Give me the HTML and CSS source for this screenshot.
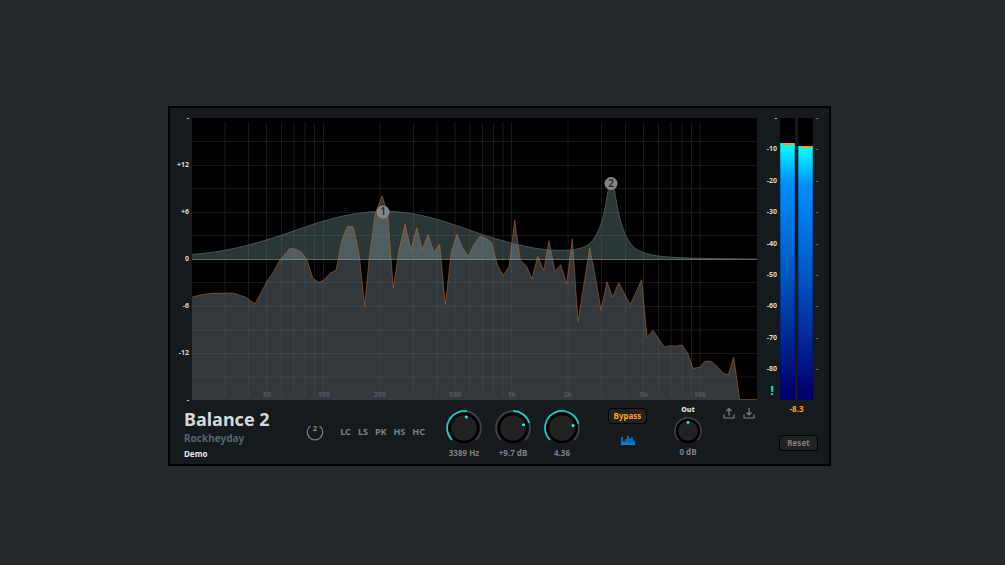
FILE: index.html
```html
<!DOCTYPE html>
<html lang="en">
<head>
    <meta charset="UTF-8">
    <meta name="viewport" content="width=device-width, initial-scale=1.0">
    <title>Balance 2</title>
    <link rel="stylesheet" href="styles.css">
</head>
<body>
    <main class="plugin">
        <ul class="scale gain-scale">
            <li>-</li>
            <li>+12</li>
            <li>+6</li>
            <li>0</li>
            <li>-6</li>
            <li>-12</li>
            <li>-</li>
        </ul>

        <svg class="plot" viewBox="0 0 565 282" role="img" aria-label="Equalizer curve and spectrum">
            <rect width="565" height="282" fill="#000"/>
            <path class="spectrum-fill" d="M0 179 10 176.7 20 175.3 41 175 53 179 63 185.7 70 173 75 163 80 156.3 88 142 98 130.3 103 131 109 133.7 115 142 121 160.7 127 164.3 132 162 138 155.3 144 152.3 146 142 150 122 155.3 108.3 161.3 108.7 167 135.3 172.7 188 177 142 183 97 190 77.7 195.7 95.3 199 140.3 201.3 170.3 207 132 213 106.3 219 131.7 224.7 109.7 230.3 131.7 236 116.3 242 134.3 247.7 126.3 253.3 186.7 259.3 134.3 265 116.3 270.7 130.3 276.3 138.3 282.3 126 288 118.3 293.7 120.3 299.7 124.7 305.3 146.7 311.3 157.7 317 148.7 322.7 102.3 328.3 142.3 334.3 147.7 340 161 345.7 138.3 351.7 152.7 357 122.7 363 153.3 368.7 146.7 374.7 166 380.3 120.7 386 203.7 397.7 129.7 403.3 158.7 409 192 415 164 420.7 179 426.7 164.7 438.3 186.7 449.7 161.7 455 218.7 461 212.3 472.3 229 478.3 227.7 484 228.3 490 227 495.7 235.3 501 250.3 507.7 249.3 513 243.3 519 243.3 524.7 248 531 255 536.3 257 541.7 239 547.7 281.5V282H0Z"/>
            <path class="curve-fill" d="M0 136.5C33 134 60 127 90 117S150 94 191 93.3C235 93 270 111 303 120.5S350 132 368 132.3C380 132.5 389 131 394.700 127.700C402 123 406 115 409.700 104C412.500 95 415 80 416.700 69L418.700 63 422 69C424 82 425.500 93 428.700 103.700C432 115 435 121 439.700 127C444 132 449 134 456 136C470 140 500 140.500 565 141H0Z"/>
            <path class="grid" d="M33 4V278M56.500 4V278M74.500 4V278M89.500 4V278M102 4V278M113 4V278M122.500 4V278M131.500 4V278M188 4V278M221.500 4V278M245 4V278M263 4V278M278 4V278M290.500 4V278M301.500 4V278M311 4V278M319.500 4V278M376 4V278M409.500 4V278M433.500 4V278M451.500 4V278M466.500 4V278M479 4V278M490 4V278M499.500 4V278M508 4V278"/>
            <path class="grid" d="M0 23.500H565M0 47.500H565M0 70.500H565M0 94.500H565M0 117.500H565M0 164.500H565M0 188.500H565M0 212H565M0 235.500H565M0 259H565"/>
            <path class="zero" d="M0 141.500H565"/>
            <path class="spectrum-line" d="M0 179 10 176.7 20 175.3 41 175 53 179 63 185.7 70 173 75 163 80 156.3 88 142 98 130.3 103 131 109 133.7 115 142 121 160.7 127 164.3 132 162 138 155.3 144 152.3 146 142 150 122 155.3 108.3 161.3 108.7 167 135.3 172.7 188 177 142 183 97 190 77.7 195.7 95.3 199 140.3 201.3 170.3 207 132 213 106.3 219 131.7 224.7 109.7 230.3 131.7 236 116.3 242 134.3 247.7 126.3 253.3 186.7 259.3 134.3 265 116.3 270.7 130.3 276.3 138.3 282.3 126 288 118.3 293.7 120.3 299.7 124.7 305.3 146.7 311.3 157.7 317 148.7 322.7 102.3 328.3 142.3 334.3 147.7 340 161 345.7 138.3 351.7 152.7 357 122.7 363 153.3 368.7 146.7 374.7 166 380.3 120.7 386 203.7 397.7 129.7 403.3 158.7 409 192 415 164 420.7 179 426.7 164.7 438.3 186.7 449.7 161.7 455 218.7 461 212.3 472.3 229 478.3 227.7 484 228.3 490 227 495.7 235.3 501 250.3 507.7 249.3 513 243.3 519 243.3 524.7 248 531 255 536.3 257 541.7 239 547.7 281.5H565"/>
            <path class="curve-line" d="M0 136.5C33 134 60 127 90 117S150 94 191 93.3C235 93 270 111 303 120.5S350 132 368 132.3C380 132.5 389 131 394.700 127.700C402 123 406 115 409.700 104C412.500 95 415 80 416.700 69L418.700 63 422 69C424 82 425.500 93 428.700 103.700C432 115 435 121 439.700 127C444 132 449 134 456 136C470 140 500 140.500 565 141"/>
            <g class="freq">
                <text x="75" y="279">50</text>
                <text x="132" y="279">100</text>
                <text x="188" y="279">200</text>
                <text x="263" y="279">500</text>
                <text x="320" y="279">1k</text>
                <text x="376" y="279">2k</text>
                <text x="452" y="279">5k</text>
                <text x="508" y="279">10k</text>
            </g>
            <g class="node">
                <circle cx="191" cy="94" r="6.500"/>
                <text x="191" y="97">1</text>
                <circle cx="419" cy="65.500" r="6.500"/>
                <text x="419" y="68.500">2</text>
            </g>
        </svg>

        <section class="meter">
            <div class="meter-side">
                <ul class="scale meter-scale">
                    <li>-</li>
                    <li>-10</li>
                    <li>-20</li>
                    <li>-30</li>
                    <li>-40</li>
                    <li>-50</li>
                    <li>-60</li>
                    <li>-70</li>
                    <li>-80</li>
                </ul>
                <span class="warn">!</span>
            </div>
            <div class="bar"><div class="level left"></div></div>
            <div class="bar"><div class="level right"></div></div>
            <ul class="scale ticks">
                <li>-</li>
                <li>-</li>
                <li>-</li>
                <li>-</li>
                <li>-</li>
                <li>-</li>
                <li>-</li>
                <li>-</li>
                <li>-</li>
            </ul>
        </section>

        <footer class="controls">
            <div class="brand">
                <h1>Balance 2</h1>
                <h2>Rockheyday</h2>
                <p>Demo</p>
            </div>

            <button class="band" aria-label="Band 2 on/off">
                <svg viewBox="0 0 18 18" width="18" height="18">
                    <path d="M4.500 3A7.700 7.700 0 1 0 13.500 3" fill="none" stroke="#7d8082" stroke-width="1.200"/>
                    <text x="9" y="8">2</text>
                </svg>
            </button>

            <div class="types">
                <button>LC</button>
                <button>LS</button>
                <button>PK</button>
                <button>HS</button>
                <button>HC</button>
            </div>

            <div class="knobs">
                <label class="knob">
                    <svg viewBox="0 0 36 36" width="36" height="36">
                        <path class="track" d="M6 30A17 17 0 1 1 30 30"/>
                        <path class="arc" d="M6 30A17 17 0 0 1 21 1.300"/>
                        <circle class="cap" cx="18" cy="18" r="14"/>
                        <circle class="dot" cx="20.300" cy="7" r="1.500"/>
                    </svg>
                    <input type="range" min="20" max="20000" value="3389" aria-label="Frequency">
                    <span>3389 Hz</span>
                </label>
                <label class="knob">
                    <svg viewBox="0 0 36 36" width="36" height="36">
                        <path class="track" d="M6 30A17 17 0 1 1 30 30"/>
                        <path class="arc" d="M18 1A17 17 0 0 1 34.300 13"/>
                        <circle class="cap" cx="18" cy="18" r="14"/>
                        <circle class="dot" cx="28.500" cy="14.700" r="1.500"/>
                    </svg>
                    <input type="range" min="-18" max="18" step="0.1" value="9.7" aria-label="Gain">
                    <span>+9.7 dB</span>
                </label>
                <label class="knob">
                    <svg viewBox="0 0 36 36" width="36" height="36">
                        <path class="track" d="M6 30A17 17 0 1 1 30 30"/>
                        <path class="arc" d="M6 30A17 17 0 1 1 34.500 13.900"/>
                        <circle class="cap" cx="18" cy="18" r="14"/>
                        <circle class="dot" cx="29" cy="15.500" r="1.500"/>
                    </svg>
                    <input type="range" min="0.1" max="10" step="0.01" value="4.36" aria-label="Q">
                    <span>4.36</span>
                </label>
            </div>

            <div class="switches">
                <button class="btn bypass">Bypass</button>
                <button class="analyzer" aria-label="Analyzer">
                    <svg viewBox="0 0 14 10" width="14" height="10">
                        <path d="M1 10V2M3 10V6M5 10V4M7 10V1M9 10V3.500M11 10V2.500M13 10V5.500" stroke="#0b80e0" stroke-width="1.600"/>
                        <path d="M0 9H14" stroke="#0b80e0" stroke-width="2"/>
                    </svg>
                </button>
            </div>

            <label class="knob out">
                <b>Out</b>
                <svg viewBox="0 0 28 28" width="28" height="28">
                    <path class="track" d="M4.800 23.200A13 13 0 1 1 23.200 23.200"/>
                    <circle class="cap" cx="14" cy="14" r="11"/>
                    <circle class="dot" cx="14" cy="5.500" r="1.400"/>
                </svg>
                <input type="range" min="-18" max="18" value="0">
                <span>0 dB</span>
            </label>

            <div class="files">
                <button aria-label="Export preset">
                    <svg viewBox="0 0 12 12" width="12" height="12">
                        <path d="M1 7.500V11H11V7.500M6 8.500V1.500M3.500 4 6 1.500 8.500 4"/>
                    </svg>
                </button>
                <button aria-label="Import preset">
                    <svg viewBox="0 0 12 12" width="12" height="12">
                        <path d="M1 7.500V11H11V7.500M6 1V8M3.500 5.500 6 8 8.500 5.500"/>
                    </svg>
                </button>
            </div>

            <div class="output">
                <span class="peak">-8.3</span>
                <button class="btn">Reset</button>
            </div>
        </footer>
    </main>
</body>
</html>
```
FILE: styles.css
```css
* {
    box-sizing: border-box;
}
body {
    margin: 0;
    padding: 106px 174px 0 168px;
    min-height: 100vh;
    background: #25282b;
    color: #d5d8da;
    font-family: "Noto Sans", "Open Sans", sans-serif;
    font-size: 8px;
    line-height: 12px;
    font-weight: bold;
}
button {
    font: inherit;
    color: inherit;
    background: none;
    border: none;
    padding: 0;
    cursor: pointer;
}
svg {
    display: block;
}
.plugin {
    display: grid;
    grid-template-columns: 22px minmax(0, 1fr) 72px;
    padding-top: 10px;
    border: 2px solid #000;
    background: #151a1d;
}

/* scales */
.scale {
    display: flex;
    flex-direction: column;
    justify-content: space-between;
    list-style: none;
    margin: 0;
    padding: 0;
    font-size: 7px;
    line-height: 8px;
    text-align: right;
}
.gain-scale {
    margin: -4px 0;
    padding-right: 3px;
}

/* plot */
.plot {
    width: 100%;
    height: auto;
}
.plot path {
    fill: none;
}
.plot .spectrum-fill {
    fill: rgba(170, 187, 200, 0.3);
}
.plot .curve-fill {
    fill: rgba(144, 180, 180, 0.3);
}
.grid {
    stroke: rgba(120, 120, 120, 0.2);
}
.zero {
    stroke: rgba(150, 160, 160, 0.65);
}
.spectrum-line {
    stroke: rgba(200, 110, 45, 0.65);
    stroke-width: 0.8;
}
.curve-line {
    stroke: #4c5456;
}
.freq {
    fill: #54585a;
    font-size: 7px;
    text-anchor: middle;
}
.node circle {
    fill: #858585;
}
.node text {
    fill: #25282b;
    font-size: 10px;
    font-weight: 600;
    text-anchor: middle;
}

/* level meter */
.meter {
    display: flex;
    padding-left: 8px;
}
.meter-side {
    display: flex;
    flex-direction: column;
    width: 12px;
    margin: -4px 3px 0 0;
}
.meter-scale {
    flex: 1;
}
.warn {
    height: 27px;
    padding: 12px 3px 0 0;
    color: #00e5e5;
    font-size: 12px;
    text-align: right;
}
.bar {
    display: flex;
    align-items: flex-end;
    width: 15px;
    margin-right: 3px;
    background: #000;
}
.level {
    flex: 1;
    border: solid rgba(0, 0, 60, 0.25);
    border-width: 0 1px;
    background: linear-gradient(#ff9a00, #ff9a00) center top / 10px 2px no-repeat,
        linear-gradient(#00ffff, #00f0ff 3%, #0090ff 15%, #0050bc 55%, #000070 97%);
}
.left {
    height: 91%;
}
.right {
    height: 90%;
}
.ticks {
    margin: -4px 0 27px;
    color: #85898b;
}

/* bottom strip */
.controls {
    grid-column: 1 / -1;
    display: flex;
    height: 64px;
    padding: 0 11px 0 14px;
    color: #7d8082;
}
.brand {
    flex: 1;
    padding-top: 9px;
}
.brand h1 {
    margin: 0;
    color: #d5d8da;
    font-size: 18px;
    line-height: 20px;
}
.brand h2 {
    margin: 0;
    color: #526671;
    font-size: 10px;
    line-height: 18px;
}
.brand p {
    margin: 0;
    padding-top: 1px;
    color: #e4e6e7;
}
.band {
    height: 18px;
    margin-top: 23px;
}
.band text {
    fill: #8b8e90;
    font-size: 7px;
    text-anchor: middle;
}
.types {
    display: flex;
    gap: 7px;
    margin: 26px 21px 0 16px;
    height: 12px;
    font-size: 9px;
}
.knobs {
    display: flex;
    gap: 13px;
}
.knob {
    position: relative;
    display: flex;
    flex-direction: column;
    align-items: center;
    width: 36px;
    padding-top: 10px;
    white-space: nowrap;
}
.knob span {
    margin-top: 1px;
}
.knob input {
    position: absolute;
    inset: 10px 0 auto;
    width: 100%;
    height: 36px;
    margin: 0;
    opacity: 0;
    cursor: pointer;
}
.track, .arc {
    fill: none;
    stroke: #42474a;
    stroke-width: 1.5;
}
.arc {
    stroke: #00e0dc;
}
.cap {
    fill: #222;
    stroke: #000;
    stroke-width: 2.5;
}
.dot {
    fill: #1cf0ec;
}
.switches {
    display: flex;
    flex-direction: column;
    align-items: center;
    gap: 11px;
    margin: 8px 27px 0 28px;
}
.btn {
    height: 16px;
    width: 39px;
    border: 1px solid #000;
    border-radius: 4px;
    background: #222;
}
.bypass {
    color: #ffa31a;
}
.out {
    width: 28px;
    padding-top: 4px;
}
.out b {
    color: #d5d8da;
    font-size: 7px;
    margin-bottom: 1px;
}
.files {
    display: flex;
    gap: 8px;
    height: 12px;
    margin: 7px 24px 0 21px;
}
.files path {
    fill: none;
    stroke: #7d8082;
    stroke-width: 1.2;
}
.output {
    display: flex;
    flex-direction: column;
    align-items: center;
    gap: 20px;
    padding-top: 3px;
}
.peak {
    padding-right: 4px;
    color: #ffa31a;
}
```
